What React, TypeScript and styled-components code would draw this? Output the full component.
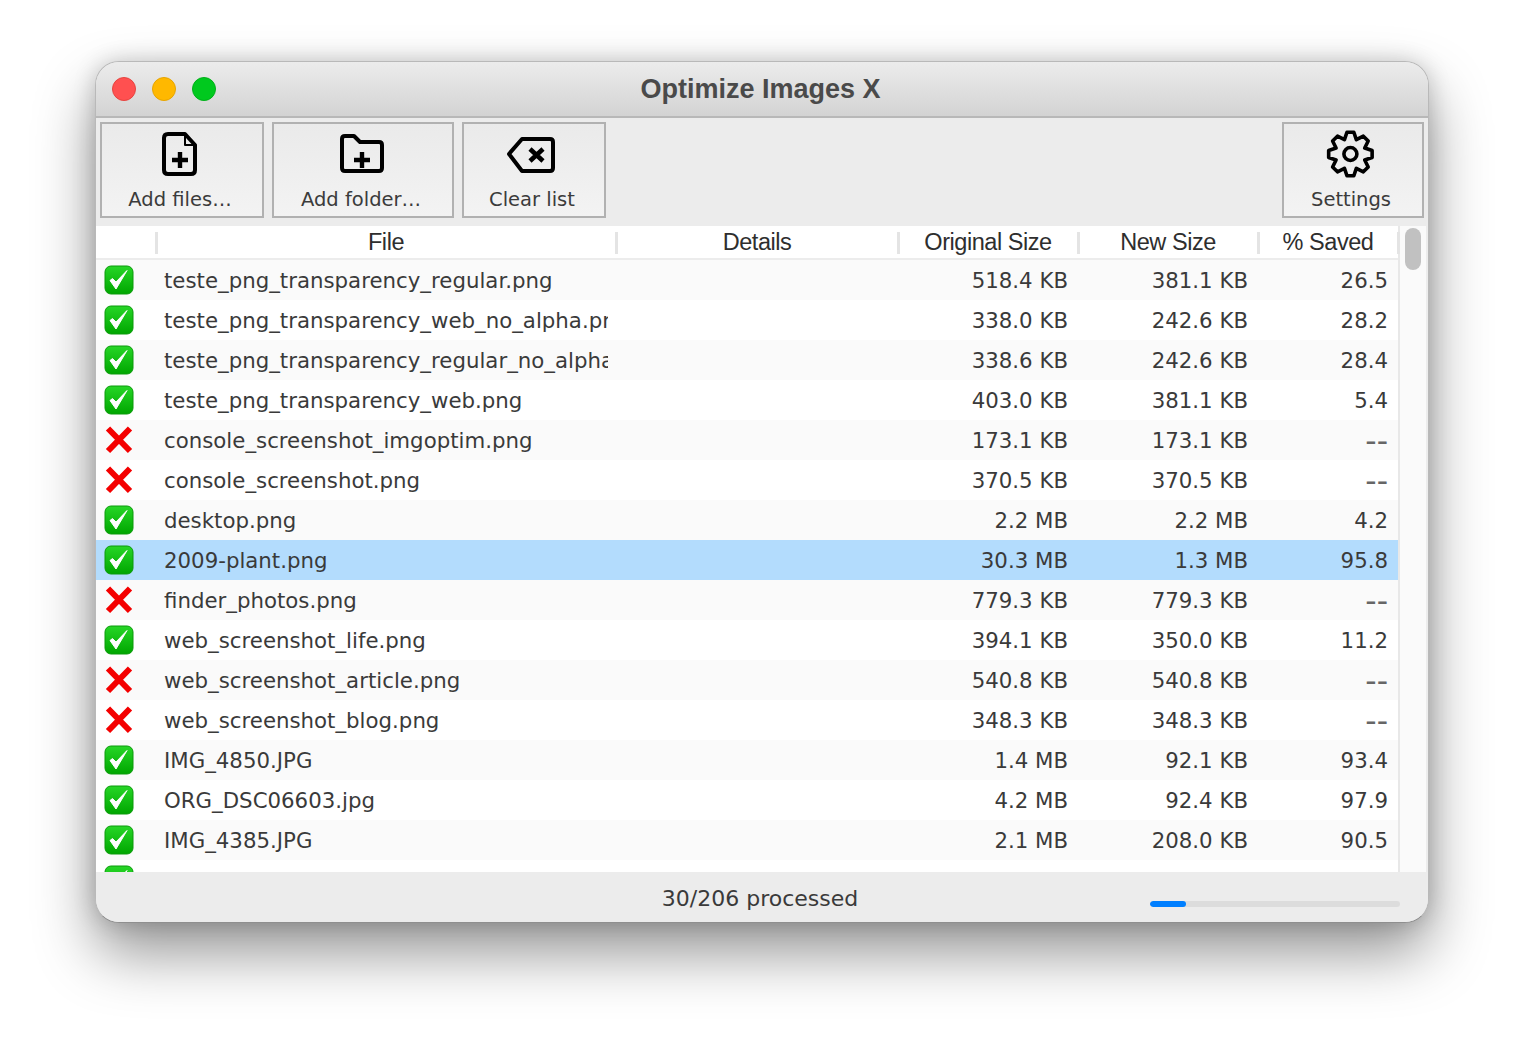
import React from 'react';
import styled, { createGlobalStyle } from 'styled-components';

type Row = [string, string, string, string, boolean];

const ROWS: Row[] = [
  ['teste_png_transparency_regular.png', '518.4 KB', '381.1 KB', '26.5', true],
  ['teste_png_transparency_web_no_alpha.png', '338.0 KB', '242.6 KB', '28.2', true],
  ['teste_png_transparency_regular_no_alpha.png', '338.6 KB', '242.6 KB', '28.4', true],
  ['teste_png_transparency_web.png', '403.0 KB', '381.1 KB', '5.4', true],
  ['console_screenshot_imgoptim.png', '173.1 KB', '173.1 KB', '--', false],
  ['console_screenshot.png', '370.5 KB', '370.5 KB', '--', false],
  ['desktop.png', '2.2 MB', '2.2 MB', '4.2', true],
  ['2009-plant.png', '30.3 MB', '1.3 MB', '95.8', true],
  ['finder_photos.png', '779.3 KB', '779.3 KB', '--', false],
  ['web_screenshot_life.png', '394.1 KB', '350.0 KB', '11.2', true],
  ['web_screenshot_article.png', '540.8 KB', '540.8 KB', '--', false],
  ['web_screenshot_blog.png', '348.3 KB', '348.3 KB', '--', false],
  ['IMG_4850.JPG', '1.4 MB', '92.1 KB', '93.4', true],
  ['ORG_DSC06603.jpg', '4.2 MB', '92.4 KB', '97.9', true],
  ['IMG_4385.JPG', '2.1 MB', '208.0 KB', '90.5', true],
  ['IMG_4386_full.JPG', '3.3 MB', '88.3 KB', '97.4', true],
];

const SELECTED = 7;

// eight rounded lobes around the centre of a 48 box
const gearPath = () => {
  const at = (deg: number, r: number) => {
    const a = (deg * Math.PI) / 180;
    return `${(23.4 + r * Math.cos(a)).toFixed(2)} ${(24 + r * Math.sin(a)).toFixed(2)}`;
  };
  let d = '';
  for (let k = 0; k < 8; k++) {
    const c = k * 45 - 90;
    d += `${k === 0 ? 'M' : 'L'}${at(c - 9, 22)} L${at(c + 9, 22)} L${at(c + 22.5, 15.5)} `;
  }
  return `${d}Z`;
};

const GlobalStyle = createGlobalStyle`
  html, body {
    margin: 0;
    background: #fff;
  }
`;

const Page = styled.div`
  padding: 61px 95px 133px;
  height: 1056px;
  box-sizing: border-box;
  overflow: hidden;
  font-family: 'DejaVu Sans', sans-serif;
`;

const Window = styled.div`
  width: 1334px;
  height: 862px;
  box-sizing: border-box;
  display: flex;
  flex-direction: column;
  background: #ececec;
  border: 1px solid #b9b9b9;
  border-bottom-color: #8f8f8f;
  border-radius: 24px;
  overflow: hidden;
  box-shadow: 0 30px 60px rgba(0, 0, 0, 0.42), 0 0 22px rgba(0, 0, 0, 0.18);
`;

const TitleBar = styled.div`
  position: relative;
  flex: none;
  height: 56px;
  box-sizing: border-box;
  display: flex;
  align-items: center;
  gap: 16px;
  padding: 0 16px;
  background: linear-gradient(#ececec, #d3d3d3);
  border-bottom: 2px solid #b8b8b8;
`;

const Light = styled.span<{ $color: string; $edge: string }>`
  width: 24px;
  height: 24px;
  box-sizing: border-box;
  border-radius: 50%;
  background: ${(props) => props.$color};
  border: 1px solid ${(props) => props.$edge};
`;

const Title = styled.div`
  position: absolute;
  left: 0;
  right: 3px;
  top: 9px;
  text-align: center;
  font-family: 'Liberation Sans', sans-serif;
  font-size: 27px;
  line-height: 36px;
  font-weight: 700;
  color: #4a4a4a;
`;

const Toolbar = styled.div`
  flex: none;
  height: 108px;
  box-sizing: border-box;
  display: flex;
  gap: 8px;
  padding: 4px 4px 8px;
  background: #ececec;
`;

const ToolButton = styled.button<{ $width: number; $push?: boolean }>`
  width: ${(props) => props.$width}px;
  height: 96px;
  box-sizing: border-box;
  margin: 0 0 0 ${(props) => (props.$push ? 'auto' : '0')};
  padding: 6px 4px 0 0;
  display: flex;
  flex-direction: column;
  align-items: center;
  background: linear-gradient(#eaeaea, #f3f3f3);
  border: 2px solid #b1b1b1;
  font-family: 'DejaVu Sans', sans-serif;
  font-size: 19.5px;
  line-height: 26px;
  color: #3b3b3b;
`;

const ToolIcon = styled.svg`
  width: 48px;
  height: 48px;
  margin-bottom: 9px;
  overflow: visible;
  fill: none;
  stroke: #000;
  stroke-width: 4;
  stroke-linejoin: round;
  stroke-linecap: square;
`;

const TableArea = styled.div`
  flex: none;
  height: 646px;
  display: flex;
  overflow: hidden;
  padding-right: 2px;
`;

const TableMain = styled.div`
  flex: none;
  width: 1302px;
  background: #fff;
`;

const Header = styled.div`
  height: 34px;
  box-sizing: border-box;
  display: flex;
  background: #fff;
  border-bottom: 2px solid #ececec;
  font-family: 'Liberation Sans', sans-serif;
  font-size: 23.5px;
  letter-spacing: -0.45px;
  color: #2e2e2e;
`;

const HeaderCell = styled.div<{ $width: number }>`
  position: relative;
  flex: none;
  width: ${(props) => props.$width}px;
  box-sizing: border-box;
  text-align: center;
  line-height: 32px;

  &::after {
    content: '';
    position: absolute;
    right: -2px;
    top: 6px;
    width: 3px;
    height: 22px;
    background: #e4e4e4;
  }
`;

const ScrollTrack = styled.div`
  flex: none;
  width: 28px;
  box-sizing: border-box;
  background: #fafafa;
  border-left: 2px solid #e8e8e8;
`;

const ScrollThumb = styled.div`
  width: 16px;
  height: 42px;
  margin: 2px 0 0 5px;
  border-radius: 8px;
  background: #c1c1c1;
`;

const RowBox = styled.div<{ $odd: boolean; $selected: boolean }>`
  display: flex;
  align-items: center;
  height: 40px;
  font-size: 21.3px;
  color: #3a3a3a;
  background: ${(props) =>
    props.$selected ? '#b3dcfd' : props.$odd ? '#fafafa' : '#fff'};
`;

const IconCell = styled.div`
  flex: none;
  width: 60px;
  box-sizing: border-box;
  padding-left: 8px;
  display: flex;
`;

const FileCell = styled.div`
  flex: none;
  width: 444px;
  margin: 0 8px;
  white-space: nowrap;
  overflow: hidden;
`;

const Spacer = styled.div`
  flex: none;
  width: 282px;
`;

const NumCell = styled.div<{ $width: number; $dash?: boolean }>`
  flex: none;
  width: ${(props) => props.$width}px;
  box-sizing: border-box;
  padding-right: 10px;
  text-align: right;
  white-space: nowrap;
  ${(props) =>
    props.$dash &&
    `font-family: 'Liberation Sans', sans-serif;
     font-size: 34px;
     font-weight: 300;
     color: #666;`}
`;

const StatusBar = styled.div`
  position: relative;
  flex: 1;
  display: flex;
  justify-content: center;
  padding: 13px 4px 0 0;
  font-size: 22px;
  line-height: 28px;
  color: #3a3a3a;
  background: #ececec;
`;

const Progress = styled.div`
  position: absolute;
  right: 28px;
  top: 29px;
  width: 250px;
  height: 6px;
  border-radius: 3px;
  background: #dcdcdc;
  overflow: hidden;
`;

const ProgressFill = styled.div`
  height: 100%;
  border-radius: 3px;
  background: #007fff;
`;

const CheckIcon = () => (
  <svg width="30" height="30" viewBox="0 0 30 30">
    <defs>
      <linearGradient id="checkGreen" x1="0" y1="0" x2="0" y2="1">
        <stop offset="0" stopColor="#27d627" />
        <stop offset="1" stopColor="#00a600" />
      </linearGradient>
    </defs>
    <rect x="1" y="1" width="28" height="28" rx="6" fill="url(#checkGreen)" stroke="#0a9a0a" />
    <path d="M6 15.5 L8.5 13.5 L12 17 L23 5.5 L12 24 Z" fill="#fff" stroke="#fff" strokeWidth="1" strokeLinejoin="round" />
  </svg>
);

const CrossIcon = () => (
  <svg width="30" height="30" viewBox="0 0 30 30">
    <path d="M4 3.5 L26 26 M26 3.5 L4 26" stroke="#f40000" strokeWidth="6" />
  </svg>
);

const App: React.FC = () => {
  return (
    <Page>
      <GlobalStyle />
      <Window>
        <TitleBar>
          <Light $color="#ff5050" $edge="#e5443f" />
          <Light $color="#ffb800" $edge="#e6a400" />
          <Light $color="#00c91e" $edge="#00b01a" />
          <Title>Optimize Images X</Title>
        </TitleBar>

        <Toolbar>
          <ToolButton $width={164}>
            <ToolIcon viewBox="0 0 48 48">
              <path d="M8 8 Q8 4 12 4 H29 L39 15 V40 Q39 44 35 44 H12 Q8 44 8 40 Z" />
              <path d="M29 4 V15 H39" strokeWidth="2" />
              <path d="M24 22 V38 M16 30 H32" strokeWidth="4.4" strokeLinecap="butt" />
            </ToolIcon>
            Add files…
          </ToolButton>
          <ToolButton $width={182}>
            <ToolIcon viewBox="0 0 48 48">
              <path d="M5 9 Q5 6 8 6 H17 L23 12 H42 Q45 12 45 15 V38 Q45 41 42 41 H8 Q5 41 5 38 Z" />
              <path d="M25 22 V38 M17 30 H33" strokeWidth="4.4" strokeLinecap="butt" />
            </ToolIcon>
            Add folder…
          </ToolButton>
          <ToolButton $width={144}>
            <ToolIcon viewBox="0 0 48 48">
              <path d="M1 24 L14 9 H42 Q45 9 45 12 V38 Q45 41 42 41 H14 Z" />
              <path d="M22 19 L35 31 M35 19 L22 31" strokeWidth="4.6" strokeLinecap="butt" />
            </ToolIcon>
            Clear list
          </ToolButton>
          <ToolButton $width={142} $push>
            <ToolIcon viewBox="0 0 48 48">
              <circle cx="23.4" cy="24" r="6.5" strokeWidth="3.6" />
              <path d={gearPath()} strokeWidth="3.6" />
            </ToolIcon>
            Settings
          </ToolButton>
        </Toolbar>

        <TableArea>
          <TableMain>
            <Header>
              <HeaderCell $width={60} />
              <HeaderCell $width={460}>File</HeaderCell>
              <HeaderCell $width={282}>Details</HeaderCell>
              <HeaderCell $width={180}>Original Size</HeaderCell>
              <HeaderCell $width={180}>New Size</HeaderCell>
              <HeaderCell $width={140}>% Saved</HeaderCell>
            </Header>
            {ROWS.map(([name, orig, next, saved, ok], i) => (
              <RowBox key={name} $odd={i % 2 === 0} $selected={i === SELECTED}>
                <IconCell>{ok ? <CheckIcon /> : <CrossIcon />}</IconCell>
                <FileCell>{name}</FileCell>
                <Spacer />
                <NumCell $width={180}>{orig}</NumCell>
                <NumCell $width={180}>{next}</NumCell>
                <NumCell $width={140} $dash={saved === '--'}>{saved}</NumCell>
              </RowBox>
            ))}
          </TableMain>
          <ScrollTrack>
            <ScrollThumb />
          </ScrollTrack>
        </TableArea>

        <StatusBar>
          30/206 processed
          <Progress>
            <ProgressFill style={{ width: `${(30 / 206) * 100}%` }} />
          </Progress>
        </StatusBar>
      </Window>
    </Page>
  );
};

export default App;
